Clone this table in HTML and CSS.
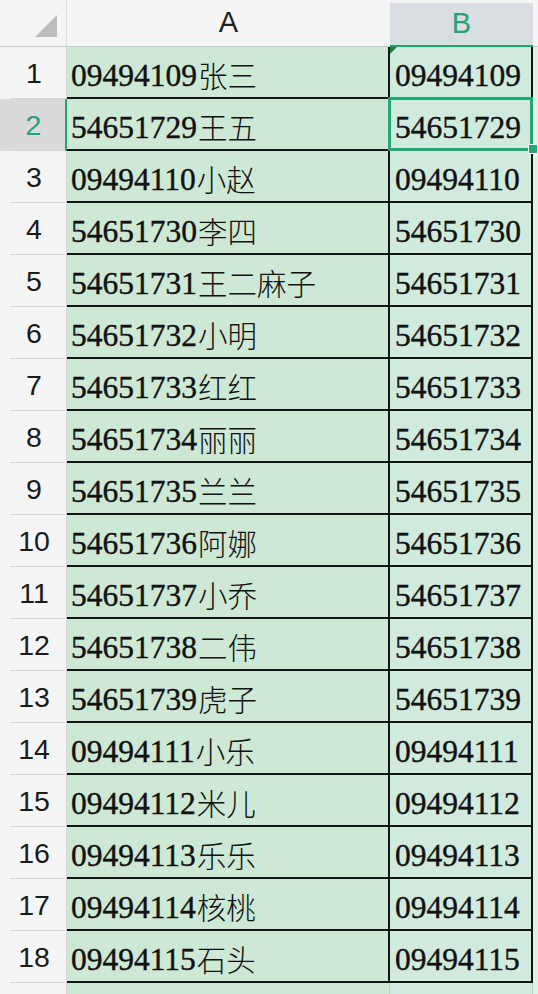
FILE: index.html
```html
<!DOCTYPE html>
<html lang="zh">
<head>
<meta charset="utf-8">
<title>Sheet</title>
<link rel="stylesheet" href="styles.css">
</head>
<body>
<div class="sheet">
  <div class="corner"><span class="tri"></span></div>
  <div class="colhead">A</div>
  <div class="colhead sel">B</div>
  <div class="colhead rest"></div>

  <div class="rh">1</div><div class="ca"><span class="num">09494109</span><span class="zh">张三</span></div><div class="cb flag"><span class="num">09494109</span></div><div class="cc"></div>
  <div class="rh sel">2</div><div class="ca"><span class="num">54651729</span><span class="zh">王五</span></div><div class="cb active"><span class="num">54651729</span><span class="handle"></span></div><div class="cc"></div>
  <div class="rh">3</div><div class="ca"><span class="num">09494110</span><span class="zh">小赵</span></div><div class="cb"><span class="num">09494110</span></div><div class="cc"></div>
  <div class="rh">4</div><div class="ca"><span class="num">54651730</span><span class="zh">李四</span></div><div class="cb"><span class="num">54651730</span></div><div class="cc"></div>
  <div class="rh">5</div><div class="ca"><span class="num">54651731</span><span class="zh">王二麻子</span></div><div class="cb"><span class="num">54651731</span></div><div class="cc"></div>
  <div class="rh">6</div><div class="ca"><span class="num">54651732</span><span class="zh">小明</span></div><div class="cb"><span class="num">54651732</span></div><div class="cc"></div>
  <div class="rh">7</div><div class="ca"><span class="num">54651733</span><span class="zh">红红</span></div><div class="cb"><span class="num">54651733</span></div><div class="cc"></div>
  <div class="rh">8</div><div class="ca"><span class="num">54651734</span><span class="zh">丽丽</span></div><div class="cb"><span class="num">54651734</span></div><div class="cc"></div>
  <div class="rh">9</div><div class="ca"><span class="num">54651735</span><span class="zh">兰兰</span></div><div class="cb"><span class="num">54651735</span></div><div class="cc"></div>
  <div class="rh">10</div><div class="ca"><span class="num">54651736</span><span class="zh">阿娜</span></div><div class="cb"><span class="num">54651736</span></div><div class="cc"></div>
  <div class="rh">11</div><div class="ca"><span class="num">54651737</span><span class="zh">小乔</span></div><div class="cb"><span class="num">54651737</span></div><div class="cc"></div>
  <div class="rh">12</div><div class="ca"><span class="num">54651738</span><span class="zh">二伟</span></div><div class="cb"><span class="num">54651738</span></div><div class="cc"></div>
  <div class="rh">13</div><div class="ca"><span class="num">54651739</span><span class="zh">虎子</span></div><div class="cb"><span class="num">54651739</span></div><div class="cc"></div>
  <div class="rh">14</div><div class="ca"><span class="num">09494111</span><span class="zh">小乐</span></div><div class="cb"><span class="num">09494111</span></div><div class="cc"></div>
  <div class="rh">15</div><div class="ca"><span class="num">09494112</span><span class="zh">米儿</span></div><div class="cb"><span class="num">09494112</span></div><div class="cc"></div>
  <div class="rh">16</div><div class="ca"><span class="num">09494113</span><span class="zh">乐乐</span></div><div class="cb"><span class="num">09494113</span></div><div class="cc"></div>
  <div class="rh">17</div><div class="ca"><span class="num">09494114</span><span class="zh">核桃</span></div><div class="cb"><span class="num">09494114</span></div><div class="cc"></div>
  <div class="rh">18</div><div class="ca"><span class="num">09494115</span><span class="zh">石头</span></div><div class="cb"><span class="num">09494115</span></div><div class="cc"></div>

  <div class="rh last"></div><div class="ca last"></div><div class="cb last"></div><div class="cc last"></div>
</div>
</body>
</html>
```

FILE: styles.css
```css
html, body {
  margin: 0;
  padding: 0;
  background: #f4f4f4;
  overflow: hidden;
}

.sheet {
  width: 538px;
  height: 994px;
  display: grid;
  grid-template-columns: 67px 323px 143px 1fr;
  grid-template-rows: 47px repeat(18, 52px) 1fr;
  overflow: hidden;
}

.corner {
  background: #f5f5f5;
  border-right: 1px solid #dcdcdc;
  border-bottom: 1px solid #c9c9c9;
  position: relative;
}

.tri {
  position: absolute;
  right: 9px;
  bottom: 9px;
  width: 0;
  height: 0;
  border-left: 22px solid transparent;
  border-bottom: 22px solid #bdbdbd;
}

.colhead {
  background: #f5f5f5;
  border-bottom: 1px solid #c9c9c9;
  display: flex;
  align-items: center;
  justify-content: center;
  font-family: "Liberation Sans", "Noto Sans", sans-serif;
  font-size: 29px;
  color: #222;
  padding-bottom: 1px;
  box-sizing: border-box;
}

.colhead.sel {
  background: #dadde2;
  color: #24a27a;
  border-top: 3px solid #f5f5f5;
  border-bottom: 2px solid #22a06f;
}

.colhead.rest {
  background: #f5f5f5;
}

.rh {
  display: flex;
  align-items: center;
  justify-content: center;
  font-family: "Liberation Sans", "Noto Sans", sans-serif;
  font-size: 28.5px;
  color: #1a1a1a;
  background:
    linear-gradient(#d5d5d5, #d5d5d5) no-repeat 10px 100% / calc(100% - 10px) 1px,
    #f5f5f5;
  border-right: 1px solid #d6d6d6;
  padding: 1px 0 0 2px;
  box-sizing: border-box;
}

.rh.sel {
  background:
    linear-gradient(#d5d5d5, #d5d5d5) no-repeat 10px 100% / calc(100% - 10px) 1px,
    #dadadd;
  color: #24a27a;
  border-right: 2px solid #22a06f;
}

.ca, .cb {
  display: flex;
  align-items: center;
  padding: 8px 0 0 4px;
  box-sizing: border-box;
  border-bottom: 2px solid #141414;
  border-right: 2px solid #141414;
  font-family: "Liberation Serif", "Noto Sans CJK SC", serif;
  font-size: 31.5px;
  color: #111;
  white-space: nowrap;
  overflow: visible;
  position: relative;
}

.ca {
  background: #cde8d4;
}

.cb {
  background: #d0eadd;
  padding-left: 5px;
}

.cc {
  background: #e3f0e8;
}

.num {
  display: inline-block;
  -webkit-text-stroke: 0.4px #111;
}

.zh {
  font-family: "Noto Sans CJK SC", sans-serif;
  font-size: 29.5px;
  font-weight: 300;
  margin-top: -5px;
  margin-left: 1px;
}

.cb.flag::before {
  content: "";
  position: absolute;
  top: 0;
  left: 0;
  width: 0;
  height: 0;
  border-top: 7px solid #1e7a3c;
  border-right: 7px solid transparent;
}

.cb.active::after {
  content: "";
  position: absolute;
  top: -2px;
  left: -2px;
  right: -2px;
  bottom: -2px;
  border: 3px solid #22a874;
  pointer-events: none;
}

.handle {
  position: absolute;
  right: -7px;
  bottom: -5px;
  width: 8px;
  height: 8px;
  background: #22a874;
  border: 1px solid #ffffff;
  z-index: 2;
}

.rh.last {
  background: #f5f5f5;
}

.ca.last, .cb.last {
  border-bottom: none;
  border-right: 1px solid #b9d4c1;
}
```
